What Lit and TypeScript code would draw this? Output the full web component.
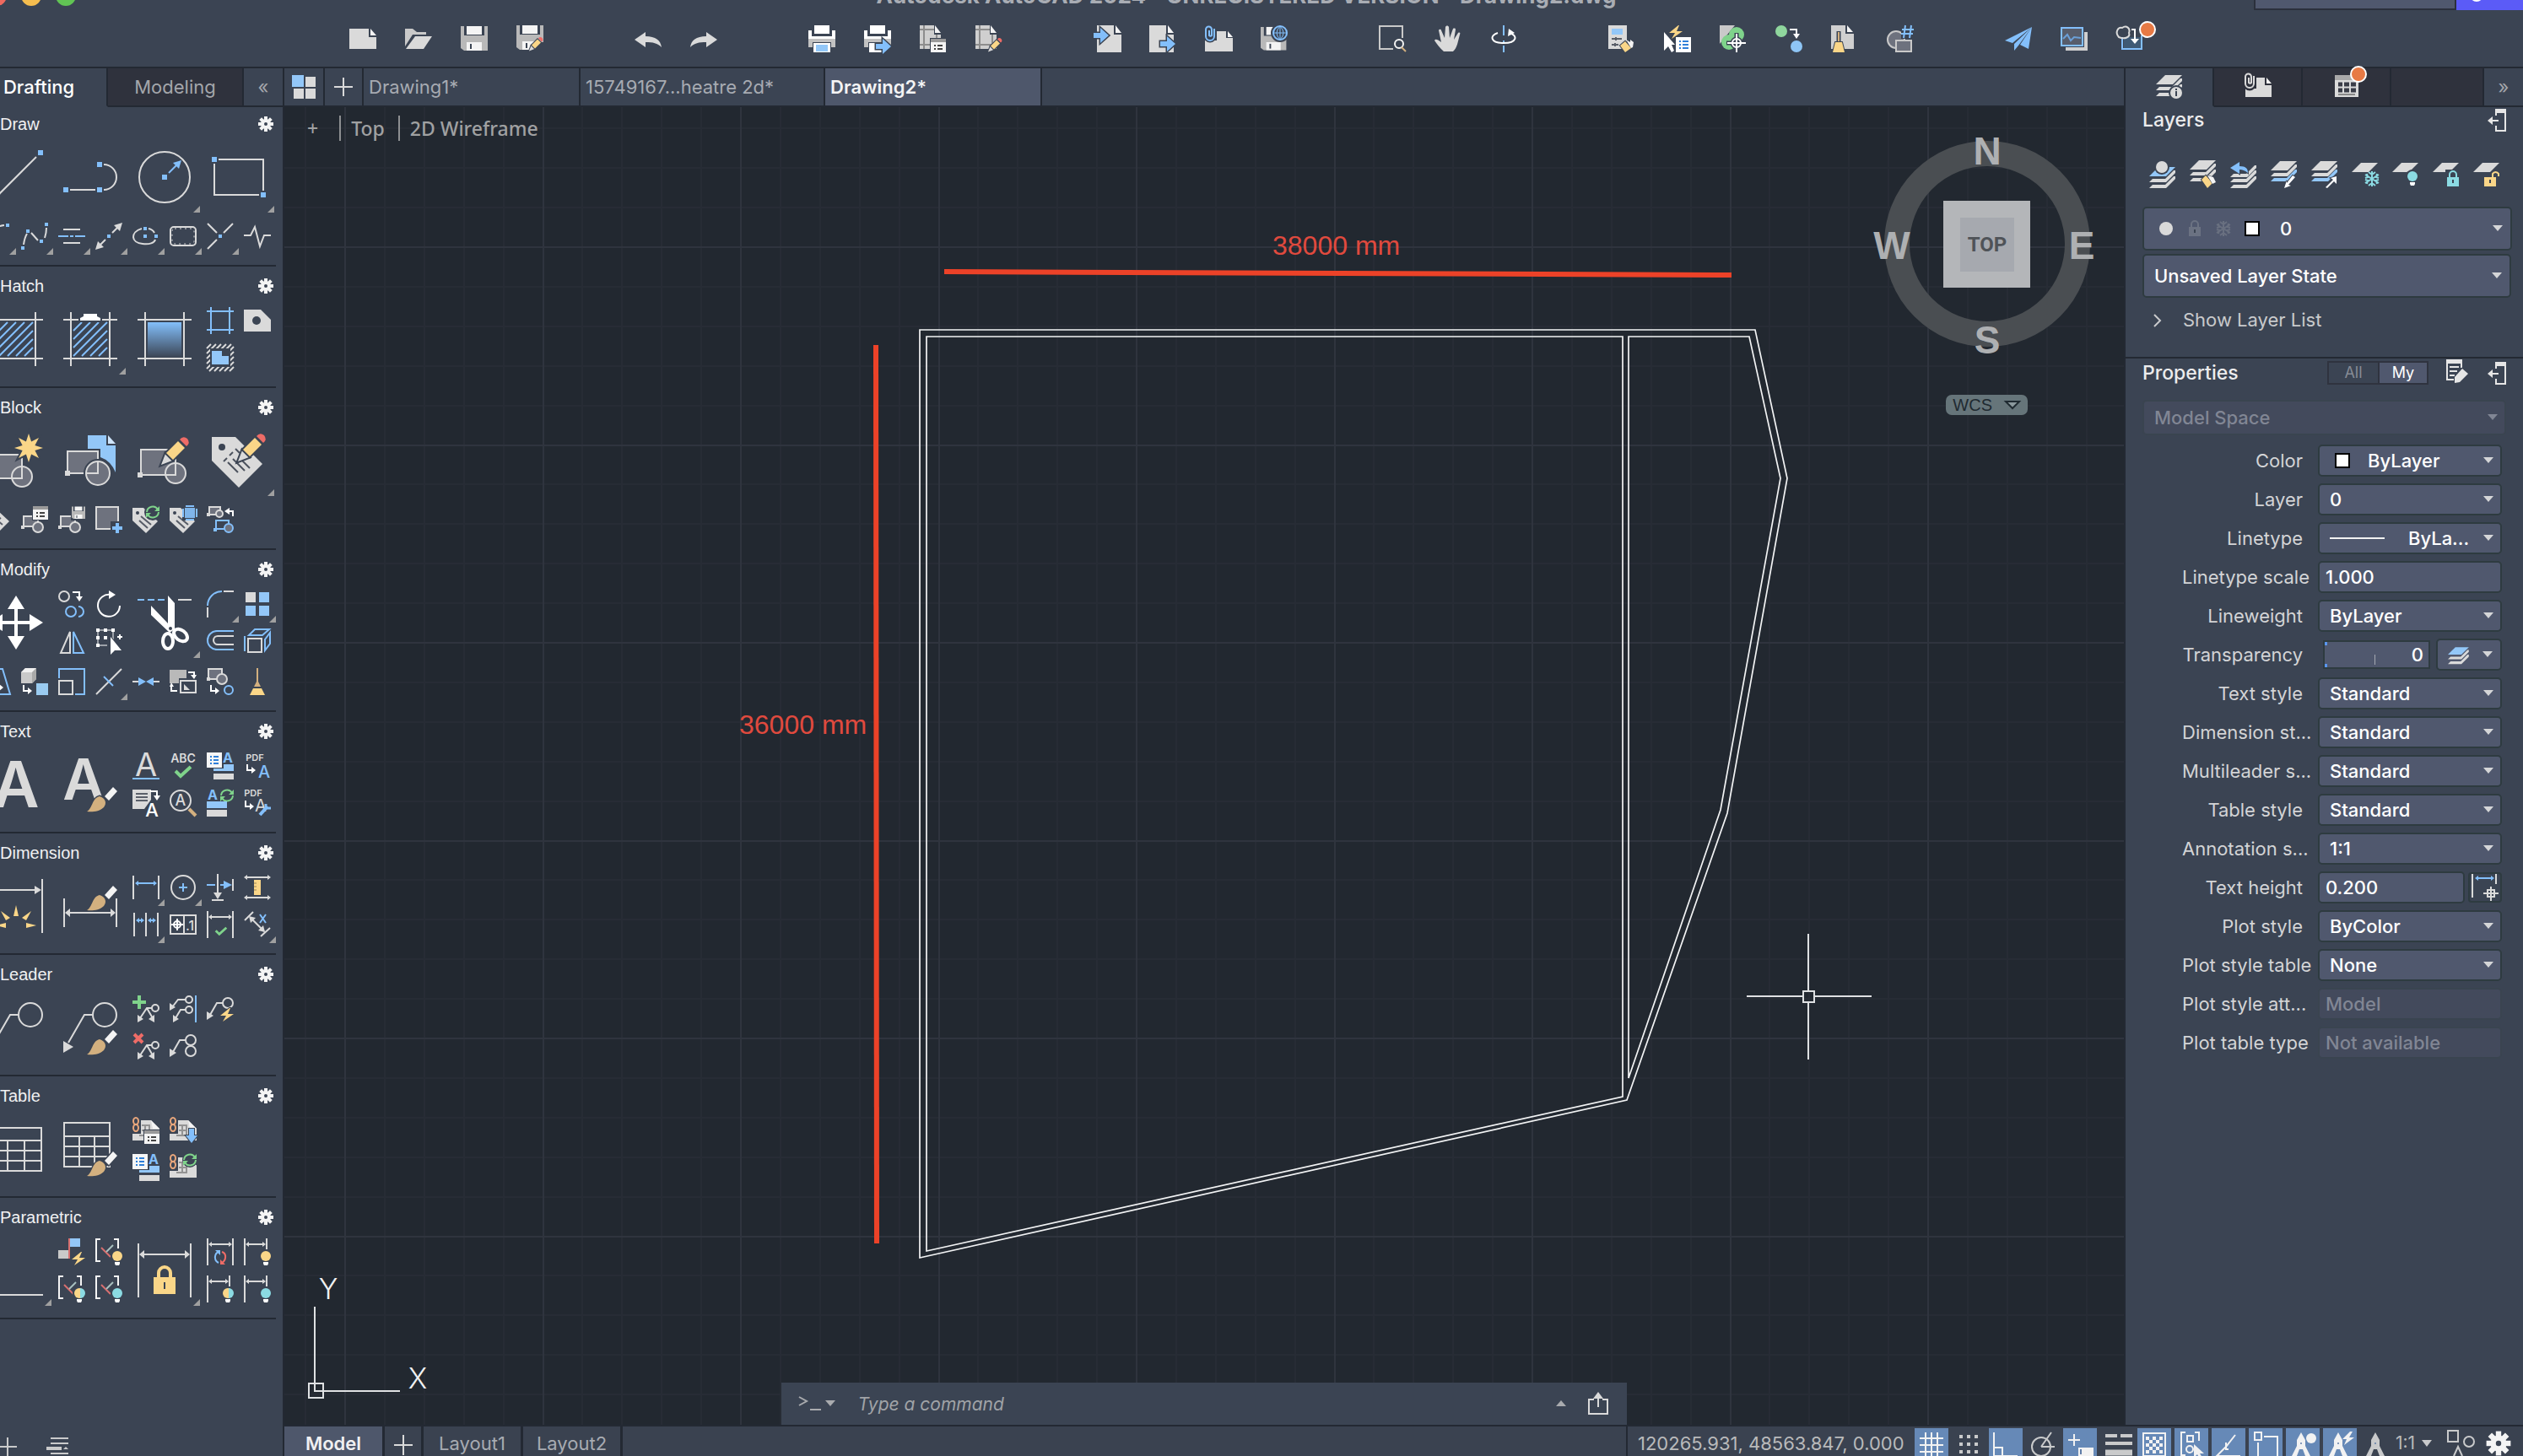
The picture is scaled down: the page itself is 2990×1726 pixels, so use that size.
import { LitElement, html, css, svg, nothing } from "lit";
import { customElement, property } from "lit/decorators.js";
import { classMap } from "lit/directives/class-map.js";

const G = "#dadada";
const B = "#83bffb";
const W = "#ffffff";
const Y = "#fad688";
const GR = "#7fd38b";
const R = "#ee6c67";
const TAN = "#d3b07f";
const BG = "#3b4453";
const FILL = "#6e727e";
const CY = "#8bdbe3";

type Part = unknown;

/* ---------- icon building blocks ---------- */
const line = (d: string, c = G, w = 2): Part => svg`<path d=${d} fill="none" stroke=${c} stroke-width=${w}></path>`;
const fill = (d: string, c = G): Part => svg`<path d=${d} fill=${c}></path>`;
const cut = (d: string, c = G, w = 2): Part =>
  svg`<path d=${d} fill=${c} stroke=${BG} stroke-width=${w} paint-order="stroke"></path>`;
const box = (x: number, y: number, w: number, h: number, c = G): Part =>
  svg`<rect x=${x} y=${y} width=${w} height=${h} fill=${c}></rect>`;
const ring = (x: number, y: number, r: number, c = G, f = "none", w = 2): Part =>
  svg`<circle cx=${x} cy=${y} r=${r} fill=${f} stroke=${c} stroke-width=${w}></circle>`;
const dot = (x: number, y: number, r: number, c = G): Part => svg`<circle cx=${x} cy=${y} r=${r} fill=${c}></circle>`;
const node = (x: number, y: number, s = 6, c = B): Part => box(x - s / 2, y - s / 2, s, s, c);
const word = (t: string, x: number, y: number, s: number, c = G, w = 600): Part =>
  svg`<text x=${x} y=${y} font-size=${s} font-weight=${w} fill=${c} text-anchor="middle" font-family="Inter, sans-serif">${t}</text>`;
const at = (x: number, y: number, part: Part, s = 1): Part =>
  svg`<g transform="translate(${x} ${y}) scale(${s})">${part}</g>`;

const pencil = svg`
  ${cut("M0 33L5 20L13 28Z", G, 4)}${cut("M6 19L20 5L28 13L14 27Z", Y, 4)}
  ${cut("M22 3Q26 -2 31 2Q35 7 30 11Z", R, 0)}`;
const brush = svg`
  ${cut("M49 46L59 35L64 40L54 51Z", "#f4f4f4", 3)}
  ${cut("M28 64C35 60 34 48 43 46C50 48 52 54 48 59C43 64 34 65 28 64Z", TAN, 3)}`;
const refresh = svg`
  ${line("M1 8A7 7 0 0 1 14 5M15 8A7 7 0 0 1 2 11", GR)}
  ${fill("M16 1V7H10ZM0 15V9H6Z", GR)}`;
const bolt = cut("M11 0L0 9H7L3 16L16 7H9L12 0Z", Y, 2);
const check = line("M1 6L7 12L19 1", GR, 4);
const bulb = (c: string, half = false): Part => svg`
  ${dot(6, 6, 8, BG)}${dot(6, 6, 6, c)}
  ${half ? fill("M7 0A6 6 0 0 1 7 12Z", CY) : nothing}
  ${fill("M3 13H9V15L8 17H4L3 15Z", W)}`;
const arrowH = (a: number, b: number, y: number, c = G, s = 4): Part => svg`
  ${line(`M${a + s} ${y}H${b - s}`, c)}
  ${fill(`M${a} ${y}L${a + s + 1} ${y - s}V${y + s}ZM${b} ${y}L${b - s - 1} ${y - s}V${y + s}Z`, c)}`;
const elbow = svg`${line("M1 0V7H7", W)}${fill("M6 3L11 7L6 11Z", W)}`;
const elbowDown = svg`${line("M0 1H8V7", W)}${fill("M4 6H12L8 12Z", W)}`;
const tag = svg`
  ${fill("M0 2H13L30 18L16 32L0 17Z")}${dot(6, 8, 2, BG)}
  ${line("M8 17L18 26M10 12L22 22M16 12L20 15", "#565b66", 2)}`;
const blockShape = svg`
  <rect x="3" y="12" width="17" height="12" fill=${FILL} stroke=${G} stroke-width="2"></rect>
  ${ring(20, 25, 6, G, FILL)}${node(2, 25, 4, G)}`;
const listCard = svg`
  ${box(0, 0, 18, 18, "#f6f6f6")}
  ${line("M4 5H6M4 9H6M4 13H6M8 5H14M8 9H14M8 13H14", "#2f7fd8")}`;
const listStyle = svg`
  ${listCard}${word("A", 25, 12, 16, B, 700)}${fill("M20 14H32V22H8V19H20Z", "#93c7f8")}${box(8, 25, 24, 7)}`;
const windowCard = svg`
  ${box(-1, -1, 20, 18, BG)}${box(0, 0, 18, 16, "#f4f4f4")}${box(0, 0, 18, 4, "#9a9a9a")}
  ${line("M4 8H6M4 12H6M8 8H14M8 12H14", "#444")}`;
const floppy = svg`
  ${fill("M0 1H4V12H28V1H32V30H4L0 27Z", "#b9b9b9")}${box(7, 1, 18, 10, "#f4f4f4")}
  ${box(7, 20, 18, 10, "#f4f4f4")}${line("M12 22V28", BG)}`;
const page = svg`${fill("M0 0H20V11H29V32H0Z")}${fill("M22 0L29 9H22Z", "#f4f4f4")}`;
const paperclip = (c: string): Part => svg`
  ${line("M11 5V13A5 5 0 0 1 1 13V5A5 5 0 0 1 11 5Z", BG, 5)}
  ${line("M11 4V13A5 5 0 0 1 1 13V5A3 3 0 0 1 8 5V12A2 2 0 0 1 5 12V6", c)}`;
const brackets = svg`
  ${line("M6 1H1V27H6M22 1H27V12", "#f4f4f4")}${line("M7 11L18 22", "#d87070")}${line("M13 16L21 8", "#a9c2c0")}`;
const chain = svg`
  <ellipse cx="4" cy="5" rx="3" ry="4" fill="none" stroke="#e9a77c" stroke-width="2"></ellipse>
  <ellipse cx="4" cy="13" rx="3" ry="4" fill="none" stroke="#e9a77c" stroke-width="2"></ellipse>`;
const linkedPage = svg`
  ${fill("M10 4H22L32 14V28H0V20H10Z")}${fill("M22 4L32 14H24Z", "#f4f4f4")}
  ${line("M11 10H20V22H8M11 16H20M15 10V22", "#939393", 2)}${chain}`;
const printer = svg`
  ${box(7, 0, 18, 10, W)}${fill("M0 6H4V13H28V6H32V16H0Z", W)}${fill("M0 16H32V26H27V20H5V26H0Z", "#c2c2c2")}
  ${box(6, 21, 20, 11, W)}`;
const plotPage = svg`
  ${fill("M0 0H17V11H25V28H0Z", "#cfcfcf")}${fill("M18 0L25 9H18Z", "#f4f4f4")}
  ${line("M5 0V28M0 5H17M0 23H25M20 11V28", "#8d8d8d")}`;
const layerSheet = (y: number, c = G): Part => fill(`M11 ${y}H31L20 ${y + 11}H0Z`, c);
const layerEdge = (y: number, c = G): Part => fill(`M4 ${y}H19L29 ${y - 10}H31V${y - 7}L20 ${y + 4}H0Z`, c);
const padlock = (c: string, open = false): Part => svg`
  ${line(open ? "M10 9V4A4 4 0 0 1 17 4V7" : "M3 9V5A4 4 0 0 1 11 5V9", c)}
  ${box(0, 8, 14, 11, c)}${line("M7 11V15", BG)}`;
const snow = (c: string): Part =>
  line("M9 0V18M1 4L17 14M17 4L1 14M5 1L9 4L13 1M5 17L9 14L13 17M1 8L4 7L3 3M17 8L14 7L15 3M1 10L4 11L3 15M17 10L14 11L15 15", c, 2);

const star = (() => {
  const pts: string[] = [];
  for (let i = 0; i < 16; i++) {
    const r = i % 2 ? 8 : 17;
    const a = (Math.PI * i) / 8;
    pts.push(`${(r * Math.sin(a)).toFixed(1)} ${(-r * Math.cos(a)).toFixed(1)}`);
  }
  return `M${pts.join("L")}Z`;
})();

const hatchFrame = svg`${line("M9 0V64M55 0V64M0 9H64M0 55H64")}`;
const hatchLines = line("M12 22L22 12M12 32L32 12M12 42L42 12M12 52L52 12M22 52L52 22M32 52L52 32M42 52L52 42", B);
const hatchRing = line(
  "M0 5L5 0M0 11L11 0M0 17L17 0M0 23L23 0M0 29L29 0M3 32L32 3M9 32L32 9M15 32L32 15M21 32L32 21M27 32L32 27",
  G, 2);

const gearShape = svg`
  <g fill="#f4f4f4">
    ${[0, 45, 90, 135].map((a) => svg`<rect x="-2" y="-9" width="4" height="18" transform="rotate(${a})"></rect>`)}
    <circle r="6"></circle>
  </g>
  <circle r="2" fill=${BG}></circle>`;

/* ---------- tool palette ---------- */
interface Tool {
  name: string;
  art: Part;
  big?: boolean;
  more?: boolean;
}
interface Section {
  title: string;
  main: Tool[];
  extra?: Tool[];
}
const big = (name: string, art: Part, more = false): Tool => ({ name, art, big: true, more });
const small = (name: string, art: Part, more = false): Tool => ({ name, art, more });

const sections: Section[] = [
  {
    title: "Draw",
    main: [
      big("Line", svg`${line("M8 56L56 8")}${node(3, 61)}${node(61, 3)}`),
      big("Polyline", svg`${line("M8 47H38M48 17A15 15 0 0 1 48 47")}${node(3, 47)}${node(43, 17)}${node(43, 47)}`),
      big("Circle", svg`${ring(32, 32, 30)}${node(32, 32)}${line("M37 27L47 17", B)}${fill("M52 12L42 15L49 22Z", B)}`, true),
      big("Rectangle", svg`${line("M8 11H61V48M56 53H3V16")}${node(3, 11)}${node(61, 53)}`, true),
    ],
    extra: [
      small("Arc", svg`${line("M24 3C14 4 7 10 4 22")}${node(28, 3, 4)}`, true),
      small("Spline", svg`${line("M3 26Q4 18 7 13M12 12L20 21M28 18Q30 12 30 6")}${node(8, 10, 4)}${node(30, 2, 4)}${node(24, 22, 4)}${node(2, 30, 4)}`, true),
      small("Multiline", svg`${line("M6 8H26M6 24H26")}${line("M0 16H12M14 16H18M20 16H32", B)}`, true),
      small("Construction line", svg`${line("M20 12L27 5M12 20L5 27")}${fill("M32 0L22 3L29 10ZM0 32L3 22L10 29Z")}${node(16, 16, 4)}`, true),
      small("Ellipse", svg`${line("M11 7C-3 11 -2 24 12 25C20 26 26 24 27 20M19 7Q24 8 26 12")}${node(15, 7, 4)}${node(15, 16, 4)}${node(28, 16, 4)}`, true),
      small("Revision cloud", svg`
        <rect x="1" y="5" width="30" height="22" rx="4" fill="none" stroke=${G} stroke-width="2"></rect>
        <rect x="3" y="7" width="26" height="18" rx="3" fill="none" stroke=${G} stroke-width="1" stroke-dasharray="2 4"></rect>`, true),
      small("Break", svg`${line("M1 1L12 12M31 1L20 12M1 31L12 20")}${node(16, 16, 4)}`, true),
      small("Breakline", line("M0 15H8L13 5L19 28L24 15H32")),
    ],
  },
  {
    title: "Hatch",
    main: [
      big("Hatch", svg`${hatchFrame}${hatchLines}`),
      big("Hatch edit", svg`${hatchFrame}${hatchLines}${cut("M20 10V7L24 5V2H40V5L44 7V10Z", W, 4)}`, true),
      big("Gradient", svg`${hatchFrame}
        <defs><linearGradient id="fade" x1="0" y1="0" x2="0" y2="1">
          <stop offset="0" stop-color=${B}></stop><stop offset="1" stop-color=${BG}></stop>
        </linearGradient></defs>
        <rect x="12" y="12" width="40" height="42" fill="url(#fade)"></rect>`),
      small("Boundary", line("M5 0V32M27 0V32M0 5H32M0 27H32", B)),
      small("Wipeout", svg`${hatchRing}${box(4, 5, 24, 22, BG)}${fill("M6 8H18V14H26V24H6Z", "#93c7f8")}`),
      small("Region", svg`${fill("M0 3H20L32 15V29H0Z")}${dot(15, 16, 5, BG)}`),
    ],
  },
  {
    title: "Block",
    main: [
      big("Create block", svg`<rect x="4" y="25" width="35" height="28" fill=${FILL} stroke=${G} stroke-width="2"></rect>
        ${ring(39, 51, 12, G, FILL)}${line("M27 53H39V40")}${at(47, 17, cut(star, Y, 4))}`),
      big("Insert block", svg`${fill("M29 2H51V14H62V46Q56 32 44 28V18H29Z", "#93c7f8")}${fill("M53 2L62 12H53Z", "#cfe5fb")}
        <rect x="5" y="21" width="36" height="26" fill=${FILL} stroke=${G} stroke-width="2"></rect>
        ${dot(41, 47, 17, BG)}${ring(41, 47, 14, G, FILL)}${line("M28 47H41V34")}${node(5, 47, 6, G)}`),
      big("Edit block", svg`<rect x="4" y="19" width="41" height="30" fill=${FILL} stroke=${G} stroke-width="2"></rect>
        ${ring(45, 47, 12, G, FILL)}${line("M34 49H45V36")}${node(3, 49, 6, G)}${at(28, 4, pencil)}`),
      big("Edit attributes", svg`${fill("M0 4H28L60 36L32 64L0 32Z")}${dot(12, 16, 4, BG)}
        ${line("M14 33L18 29M21 26L25 22M19 34L31 46M25 30L39 44M28 18L33 23M36 32L45 41", "#4c525e")}${at(31, 0, pencil)}`, true),
    ],
    extra: [
      small("Define attributes", tag),
      small("Block properties", svg`${blockShape}${at(14, 0, windowCard)}`),
      small("Write block", svg`${blockShape}${box(15, 0, 17, 17, BG)}${at(16, 0, floppy, 0.5)}`),
      small("Base point", svg`<rect x="1" y="1" width="26" height="26" fill=${FILL} stroke=${G} stroke-width="2"></rect>
        ${box(18, 18, 14, 14, BG)}${line("M26 20V32M20 26H32", B, 4)}`),
      small("Sync attributes", svg`${tag}${dot(24, 7, 10, BG)}${at(16, -1, refresh)}`),
      small("Attribute display", svg`${tag}${box(15, -1, 18, 18, BG)}${box(18, 2, 12, 12, "#7fb5ea")}
        ${line("M19 0H29M19 16H29M16 3V13M32 3V13", B)}`),
      small("Replace block", svg`
        <rect x="3" y="1" width="13" height="9" fill=${FILL} stroke=${G} stroke-width="2"></rect>${ring(15, 9, 4, G, FILL)}${node(2, 10, 4, G)}
        <rect x="11" y="17" width="15" height="10" fill=${BG} stroke=${B} stroke-width="2"></rect>${ring(26, 26, 5, B, FILL)}${node(10, 28, 4, B)}
        ${line("M31 12V6H25", W)}${fill("M27 2L21 6L27 10Z", W)}`),
    ],
  },
  {
    title: "Modify",
    main: [
      big("Move", fill("M32 0L42 16H34V30H48V22L64 32L48 42V34H34V48H42L32 64L22 48H30V34H16V42L0 32L16 22V30H30V16H22Z", W)),
      small("Copy", svg`${ring(7, 7, 6)}${at(17, 1, elbowDown)}${ring(15, 25, 6, B)}${line("M24 19A6 6 0 1 1 24 31", B)}`),
      small("Mirror", svg`${line("M14 5V30H3Z")}${line("M18 5V30H30Z", B)}`),
      small("Rotate", svg`${line("M29 18A13 13 0 1 1 18 5", W)}${fill("M16 0L24 5L16 10Z", W)}`),
      small("Stretch", svg`${[[3, 3], [12, 3], [21, 3], [3, 12], [12, 12], [3, 21]].map(([x, y]) => node(x, y, 4, W))}
        ${line("M3 3H21V14M3 3V21H14", W, 1)}${line("M26 11H32M29 8V14", W)}${cut("M18 11V32L23 27H31Z", W, 2)}`),
      big("Trim", svg`${line("M0 5H8M12 5H20M24 5H32", B)}${line("M48 5H64")}
        ${fill("M36 0L44 9V40L38 44L16 23V12L36 33Z", W)}${dot(39, 39, 2, BG)}
        <ellipse cx="36" cy="54" rx="6" ry="9" fill="none" stroke=${W} stroke-width="4"></ellipse>
        <ellipse cx="51" cy="47" rx="9" ry="6" transform="rotate(38 51 47)" fill="none" stroke=${W} stroke-width="4"></ellipse>`, true),
      small("Fillet", svg`${line("M1 18A17 17 0 0 1 18 1", B)}${line("M20 1H32M1 20V32")}`, true),
      small("Offset", svg`${line("M32 4H12A11 11 0 0 0 12 26H32", B)}${line("M32 10H13A5 5 0 0 0 13 20H32")}`),
      small("Array", svg`${box(2, 2, 12, 12)}${box(18, 2, 12, 12, "#93c7f8")}${box(2, 18, 12, 12, "#93c7f8")}${box(18, 18, 12, 12, "#93c7f8")}`, true),
      small("Presspull", svg`<rect x="5" y="13" width="16" height="16" fill="none" stroke=${G} stroke-width="2"></rect>
        ${line("M6 9L13 2H30L22 9ZM25 14L31 6V19L25 27ZM1 10V28", B)}`),
    ],
    extra: [
      small("Taper", svg`${line("M12 1H22L31 31H4", B)}${at(12, 16, elbow)}`),
      small("3D copy", svg`${fill("M0 5L5 0H18V13L13 18H0Z", "#c9c9c9")}${fill("M0 5L5 0H18L13 5Z", "#f0f0f0")}${fill("M13 5L18 0V13L13 18Z", "#a9a9a9")}
        ${box(18, 18, 14, 14, "#9acbf0")}${at(2, 20, elbow)}`),
      small("Scale", svg`${line("M1 15H17V31H1Z")}${line("M1 12V1H31V31H20", B)}`),
      small("Break at point", svg`${line("M1 31L31 1")}${line("M10 10L21 21", B)}`, true),
      small("Join", svg`${line("M0 16H7M25 16H32")}${fill("M7 11L16 16L7 21ZM25 11L16 16L25 21Z", B)}`),
      small("Draw order", svg`${box(0, 2, 20, 16, "#b9b9b9")}${box(11, 12, 21, 20, BG)}${line("M13 15H31V29H13Z")}${fill("M17 19L24 26H17Z")}
        ${line("M22 5H29V9M2 21V27H9", W)}${fill("M25 8H32L29 13ZM0 22H5L2 17Z", W)}`),
      small("Copy nested", svg`<rect x="2" y="1" width="16" height="12" fill=${FILL} stroke=${G} stroke-width="2"></rect>
        ${ring(18, 13, 6, G, FILL)}${node(2, 13, 4, G)}${at(4, 20, elbow)}${ring(26, 26, 5, B)}`),
      small("Purge", svg`${line("M16 0V18", TAN)}${fill("M12 22L16 14L20 22Z", TAN)}${fill("M11 24H21L25 32H7Z", Y)}`),
    ],
  },
  {
    title: "Text",
    main: [
      big("Multiline text", word("A", 32, 59, 76, G, 600)),
      big("Text style", svg`${word("A", 24, 50, 68, G, 600)}${brush}`),
      small("Single line text", svg`${word("A", 16, 28, 38, G, 400)}${box(0, 30, 32, 2, B)}`),
      small("Text align", svg`${fill("M0 0H22V12L14 23H0Z")}${line("M4 5H18M4 9H18M4 13H18", "#5a5f69")}${at(21, 1, elbowDown)}${word("A", 23, 32, 22, W, 500)}`),
      small("Spelling", svg`${word("ABC", 16, 12, 14, G, 600)}${at(6, 16, check)}`),
      small("Find text", svg`${ring(13, 13, 12)}${word("A", 13, 19, 18, G, 500)}${line("M23 23L31 31", TAN, 4)}`),
      small("Text styles list", listStyle),
      small("Update text", svg`${word("A", 7, 12, 16, B, 700)}${at(16, -1, refresh)}${box(0, 14, 24, 8, "#93c7f8")}${box(0, 24, 24, 8)}`),
      small("PDF to text", svg`${word("PDF", 13, 10, 11, G, 600)}${at(3, 14, elbow)}${word("A", 24, 30, 20, B, 500)}`),
      small("PDF recognition", svg`${word("PDF", 11, 8, 11, G, 600)}${at(1, 13, elbow)}${word("A", 20, 26, 20, G, 400)}
        ${line("M19 30L28 20", B, 4)}${line("M26 17V22H32", B, 3)}`),
    ],
  },
  {
    title: "Dimension",
    main: [
      big("Dimension", svg`${line("M0 13H56M63 0V64")}${fill("M62 13L54 8V18Z")}
        ${fill("M32 31L35 44H29ZM50 38L44 49L39 46ZM14 38L20 49L25 46ZM56 55L44 52V58ZM8 55L20 52V58Z", Y)}`),
      big("Dimension style", svg`${line("M1 23V57M63 23V57")}${arrowH(2, 62, 40, G, 5)}${at(0, -27, brush)}`),
      small("Linear", svg`${line("M1 2V30M31 2V30")}${arrowH(3, 29, 11, B, 3)}`, true),
      small("Continue", svg`${line("M2 2V30M16 2V30M30 2V30")}${arrowH(4, 14, 11, B, 3)}${arrowH(18, 28, 11, B, 3)}`, true),
      small("Center mark", svg`${ring(16, 16, 14)}${line("M16 11V21M11 16H21", B)}`, true),
      small("Tolerance", svg`${line("M1 5H31V27H1ZM17 5V27")}${ring(9, 16, 4, W)}${line("M9 9V23M2 16H16", W)}${word(".1", 24, 23, 16, G, 500)}`),
      small("Ordinate", svg`${line("M13 0V24M6 31H20M31 6V20")}${fill("M8 22H18L13 30Z")}${line("M0 13H10M16 13H22", B)}${fill("M20 8L30 13L20 18Z", B)}`),
      small("Check dimension", svg`${line("M1 0V32M31 0V32")}${arrowH(2, 30, 7, G, 3)}${at(10, 19, check, 0.7)}`),
      small("Dimension space", svg`${arrowH(0, 32, 4, G, 3)}${arrowH(0, 32, 28, G, 3)}${box(12, 7, 8, 18, Y)}${line("M12 11H15M12 15H15M12 19H15", "#9a8455", 1)}`),
      small("Oblique", svg`${line("M1 11L11 1M20 30L31 20M8 8L24 24")}${fill("M6 6L14 8L8 14ZM25 25L17 23L23 17Z")}${line("M19 4L26 14M26 4L19 14", B)}`, true),
    ],
  },
  {
    title: "Leader",
    main: [
      big("Multileader", svg`${ring(49, 17, 14)}${line("M34 17H25L6 50")}${fill("M0 62V48L12 55Z")}`),
      big("Multileader style", svg`${ring(49, 17, 14)}${line("M34 17H25L6 50")}${fill("M0 62V48L12 55Z")}${brush}`),
      small("Add leader", svg`${line("M8 0V16M0 8H16", GR, 4)}${ring(27, 15, 4)}${line("M23 15H17L9 27M17 15L24 27")}${fill("M6 32V23L13 28ZM26 32V23L19 28Z")}`),
      small("Remove leader", svg`${line("M2 2L12 12M12 2L2 12", R, 4)}${ring(27, 15, 4)}${line("M23 15H17L9 27M17 15L24 27")}${fill("M6 32V23L13 28ZM26 32V23L19 28Z")}`),
      small("Align leaders", svg`${ring(23, 5, 4)}${ring(23, 17, 4)}${line("M19 5H10L3 14M19 17H13L7 27")}${fill("M0 18V9L7 14ZM4 32V23L11 28Z")}${box(30, 0, 2, 32, B)}`),
      small("Collect leaders", svg`${ring(25, 9, 6)}${ring(25, 22, 6)}${line("M19 9H12L4 23")}${fill("M0 29V19L8 24Z")}`),
      small("Quick leader", svg`${ring(25, 9, 6)}${line("M19 9H12L4 23")}${fill("M0 29V19L8 24Z")}${at(16, 15, bolt)}`),
    ],
  },
  {
    title: "Table",
    main: [
      big("Table", line("M2 7H62V58H2ZM2 22H62M2 34H62M2 46H62M22 22V58M42 22V58")),
      big("Table style", svg`${line("M1 1H55V53H1ZM1 17H55M1 29H55M1 41H55M19 17V53M37 17V53")}${brush}`),
      small("Link data", svg`${linkedPage}${at(14, 16, windowCard)}`),
      small("Table styles list", listStyle),
      small("Download data", svg`${linkedPage}${cut("M23 14H29V22H33L26 31L19 22H23Z", B, 2)}`),
      small("Upload data", svg`${linkedPage}${dot(24, 7, 9, BG)}${at(16, -1, refresh)}`),
    ],
  },
  {
    title: "Parametric",
    main: [
      big("Geometric constraint", line("M0 61H64"), true),
      small("Auto constrain", svg`${box(14, 0, 12, 10, "#93c7f8")}${box(0, 14, 12, 10, "#c9c9c9")}${box(12, 0, 2, 24, "#d87070")}${at(16, 16, bolt)}`),
      small("Toggle constraints", svg`${brackets}${at(19, 15, bulb(Y, true))}`),
      small("Show constraints", svg`${brackets}${at(20, 15, bulb(Y))}`),
      small("Hide constraints", svg`${brackets}${at(20, 15, bulb(CY))}`),
      big("Dimensional constraint", svg`${line("M1 0V64M63 0V64")}${arrowH(2, 62, 13, G, 5)}
        ${line("M25 41V35A7 7 0 0 1 39 35V41", Y, 4)}${box(19, 40, 26, 20, Y)}${line("M32 46V54", BG)}`, true),
      small("Convert constraint", svg`${line("M1 0V32M31 0V32")}${arrowH(2, 30, 7, G, 3)}
        ${line("M14 29C8 26 9 18 14 16", B)}${line("M18 16C24 18 23 26 18 29", R)}${fill("M10 14H16V20Z", B)}${fill("M22 31H16V25Z", R)}`),
      small("Toggle dimensions", svg`${line("M1 0V32M27 0V13")}${arrowH(2, 26, 7, G, 3)}${at(19, 15, bulb(Y, true))}`),
      small("Show dimensions", svg`${line("M1 0V32M27 0V13")}${arrowH(2, 26, 7, G, 3)}${at(20, 15, bulb(Y))}`),
      small("Hide dimensions", svg`${line("M1 0V32M27 0V13")}${arrowH(2, 26, 7, G, 3)}${at(20, 15, bulb(CY))}`),
    ],
  },
];

/* ---------- top toolbar ---------- */
const arrowOut = (x: number, y: number): Part => at(x, y, cut("M0 4H8V-2L18 7L8 16V10H0Z", B, 3));
const toolbar: [string, Part][][] = [
  [
    ["New", svg`${fill("M0 4H23V14H32V28H0Z")}${fill("M25 4L32 12H25Z", "#f4f4f4")}`],
    ["Open", svg`${fill("M0 4H9L14 8H25V11H9L0 25Z", "#c9c9c9")}${fill("M12 13H32L22 28H1Z")}`],
    ["Save", floppy],
    ["Save as", svg`${at(0, -1, floppy)}${box(20, 20, 12, 12, BG)}${at(15, 14, pencil, 0.5)}`],
  ],
  [
    ["Undo", fill("M13 8V13C25 13 31 18 32 26C27 21 22 20 13 20V26L0 17Z")],
    ["Redo", fill("M19 8V13C7 13 1 18 0 26C5 21 10 20 19 20V26L32 17Z")],
  ],
  [
    ["Plot", svg`${printer}${box(9, 23, 14, 8, "#93c7f8")}`],
    ["Batch plot", svg`${printer}${arrowOut(14, 18)}`],
    ["Page setup", svg`${plotPage}${at(13, 16, windowCard)}`],
    ["Plot styles", svg`${plotPage}${at(15, 15, pencil, 0.5)}`],
  ],
  [
    ["Import", svg`${at(4, 0, page)}${arrowOut(0, 5)}`],
    ["Export", svg`${page}${arrowOut(13, 15)}`],
    ["Attach", svg`${fill("M0 18H14V7H25V15H33V31H0Z")}${fill("M27 7L33 14H27Z", "#f4f4f4")}${paperclip(B)}`],
    ["Save to web", svg`${at(0, 1, floppy, 0.95)}${dot(23, 9, 11, BG)}${ring(23, 9, 8, B)}
      ${line("M15 9H31M23 1V17M23 1Q15 9 23 17M23 1Q31 9 23 17", B, 1)}`],
  ],
  [
    ["Zoom window", svg`${line("M17 28H1V1H28V15", "#c9c9c9")}${ring(24, 22, 5, "#f4f4f4")}${line("M27 26L32 31", TAN)}`],
    ["Pan", fill("M11 31C6 27 3 22 0 18C1 16 3 16 8 20L5 6C6 4 8 5 8 6L12 15L13 2C14 0 16 0 17 2L18 15L22 4C24 3 25 4 25 5L23 17L28 9C30 8 31 9 30 11C28 18 27 27 22 31Z")],
    ["Orbit", svg`${line("M16 0V12M16 18V20M16 24V32", B)}${line("M9 9C-1 12 0 21 16 21C32 21 33 12 23 9", W)}${fill("M22 4L29 9L21 13Z", W)}`],
  ],
  [
    ["Properties", svg`${fill("M0 0H22V18L16 28H0Z")}${box(4, 4, 13, 7, "#93c7f8")}${line("M4 16H16M4 23H12M9 14V18M8 21V25", "#5a5f69")}
      ${cut("M14 24L20 19L27 27L20 32Z", Y, 2)}${fill("M21 17L26 20L26 17L30 20L29 26L27 27Z", "#f4f4f4")}`],
    ["Quick select", svg`${at(6, 0, bolt)}${fill("M0 8V30L5 25L9 32L12 30L9 23H13Z", W)}${box(14, 14, 18, 18, W)}${line("M18 19H20M18 23H20M18 27H20M22 19H29M22 23H29M22 27H29", "#2f7fd8")}`],
    ["Geolocation", svg`${fill("M0 0H18L0 22Z", "#c9c9c9")}${dot(20, 11, 9, GR)}${dot(11, 20, 9, GR)}
      ${ring(20, 21, 5, BG, "none", 5)}${line("M20 9V32M8 21H31", BG, 5)}${ring(20, 21, 5, W)}${line("M20 10V32M9 21H31", W)}`],
    ["Match", svg`${dot(7, 7, 7, "#8fd69d")}${dot(25, 25, 7, "#8ec5f5")}${at(17, 4, elbowDown)}`],
    ["Purge drawing", svg`${fill("M0 0H17V10H27V28H0Z", "#d0d0d0")}${fill("M19 0L26 8H19Z", "#f4f4f4")}
      ${line("M9 7V20", BG, 5)}${line("M9 8V20", TAN)}${cut("M5 20H13L16 32H2Z", Y, 2)}`],
    ["Count", svg`${ring(11, 17, 10, "#c9c9c9", FILL)}<rect x="11" y="18" width="18" height="13" fill=${FILL} stroke="#c9c9c9" stroke-width="2"></rect>
      ${box(17, -1, 16, 17, BG)}${line("M22 0L20 15M29 0L27 15M18 5H32M17 10H31", B)}`],
  ],
  [
    ["Send", fill("M32 2L0 18L9 21ZM32 2L11 22V30L16 24ZM32 2L18 23L28 28Z", B)],
    ["Compare", svg`${box(6, 8, 26, 22, "#d0d0d0")}${box(0, 2, 28, 24, BG)}
      <rect x="1" y="3" width="25" height="21" fill="#575d6b" stroke=${B} stroke-width="2"></rect>${line("M3 16L8 11L12 18L16 14L24 15", "#6b9fd6")}`],
    ["Cloud share", svg`${line("M7 14V28H30V12", B)}${box(9, 14, 20, 13, "#3f5a75")}
      ${line("M3 14C-2 8 2 2 7 3C12 -1 17 4 15 9C17 14 10 17 3 14Z")}${line("M18 5H22V18", W)}${fill("M17 16H27L22 22Z", W)}
      <circle cx="37" cy="5" r="9" fill="#e77a45" stroke="#fff" stroke-width="2"></circle>`],
  ],
];

/* ---------- layer tools ---------- */
const layerTools: [string, Part][] = [
  ["Match layer", svg`${layerSheet(7, "#93c7f8")}${layerEdge(21)}${layerEdge(28)}${dot(15, 7, 9, BG)}${dot(15, 7, 7, G)}`],
  ["Layer properties", svg`${layerSheet(-1)}${layerEdge(13)}${layerEdge(20)}${cut("M14 22L19 17L27 26L21 32Z", Y, 2)}${cut("M21 17L28 19L31 25L27 27Z", "#f4f4f4", 1)}`],
  ["Previous layer", svg`${layerEdge(15)}${layerEdge(21)}${layerEdge(28)}${cut("M11 1V6C19 6 21 9 21 14C17 11 15 10 11 10V15L0 8Z", B, 2)}`],
  ["Merge down", svg`${layerSheet(0)}${layerEdge(14)}${layerEdge(20, "#93c7f8")}${cut("M26 17L19 26V23L16 32L24 29L21 28L29 19Z", W, 2)}`],
  ["Merge up", svg`${layerSheet(0)}${layerEdge(14)}${layerEdge(20, "#93c7f8")}${cut("M17 31L26 22L23 20L30 18L30 27L27 24L19 32Z", W, 2)}`],
  ["Freeze layer", svg`${layerSheet(2)}${dot(24, 21, 9, BG)}${at(15, 12, snow(CY))}`],
  ["Layer off", svg`${layerSheet(2)}${at(18, 12, bulb(CY))}`],
  ["Lock layer", svg`${layerSheet(2)}${box(15, 10, 18, 20, BG)}${at(17, 11, padlock(CY))}`],
  ["Unlock layer", svg`${layerSheet(2)}${box(11, 13, 18, 17, BG)}${at(13, 11, padlock(Y, true))}`],
];
const sheetStack = svg`${layerSheet(4, "#93c7f8")}${layerEdge(18)}${layerEdge(25)}`;
const dockArt = svg`${line("M10 9V3H21V27H10V21", "#e6e6e6")}${box(9, 1, 13, 5, "#e6e6e6")}${line("M4 15H13", "#e6e6e6")}${fill("M0 15L6 10V20Z", "#e6e6e6")}`;

/* ---------- properties ---------- */
interface Prop {
  label: string;
  value: string;
  kind?: "select" | "input" | "disabled" | "slider" | "height" | "color" | "linetype";
}
const props: Prop[] = [
  { label: "Color", value: "ByLayer", kind: "color" },
  { label: "Layer", value: "0" },
  { label: "Linetype", value: "ByLa...", kind: "linetype" },
  { label: "Linetype scale", value: "1.000", kind: "input" },
  { label: "Lineweight", value: "ByLayer" },
  { label: "Transparency", value: "0", kind: "slider" },
  { label: "Text style", value: "Standard" },
  { label: "Dimension st...", value: "Standard" },
  { label: "Multileader s...", value: "Standard" },
  { label: "Table style", value: "Standard" },
  { label: "Annotation s...", value: "1:1" },
  { label: "Text height", value: "0.200", kind: "height" },
  { label: "Plot style", value: "ByColor" },
  { label: "Plot style table", value: "None" },
  { label: "Plot style att...", value: "Model", kind: "disabled" },
  { label: "Plot table type", value: "Not available", kind: "disabled" },
];

/* ---------- status toggles ---------- */
const H = "#f2f2f2";
const D = "#c9cacb";
const compassLeg = (c: string): Part => svg`${fill("M12 0L17 9V16L23 28H17L14 20H10L7 28H1L7 16V9Z", c)}${dot(12, 13, 1, "#5f7da8")}`;
const toggles: { name: string; on: boolean; art: Part }[] = [
  { name: "Grid", on: true, art: line("M7 0V30M14 0V30M21 0V30M0 7H28M0 15H28M0 23H28", H) },
  { name: "Snap", on: false, art: svg`${[2, 11, 20].map((x) => [3, 12, 21].map((y) => svg`${node(x + 3, y + 2, 4, D)}`))}` },
  { name: "Ortho", on: true, art: line("M0 0V28H28M0 18H10V28", H) },
  { name: "Polar tracking", on: false, art: svg`${ring(12, 17, 11, D)}${line("M12 17H28M12 17L24 0", D)}` },
  { name: "Dynamic input", on: true, art: svg`${line("M7 2V16M0 9H14", H)}${box(12, 18, 18, 10, H)}${line("M15 20V26", "#5f7da8")}` },
  { name: "Lineweight", on: false, art: svg`${line("M0 4H14M18 4H32", D, 4)}${line("M0 13H32", D, 4)}${line("M0 24H32", D, 7)}` },
  {
    name: "Transparency", on: true,
    art: svg`${line("M1 1H27V28H1Z", H)}${[0, 1, 2, 3, 4].map((r) => [0, 1, 2, 3, 4].map((c) => ((r + c) % 2 ? nothing : svg`${box(4 + c * 4, 5 + r * 4, 4, 4, H)}`)))}`,
  },
  { name: "Selection cycling", on: true, art: svg`${line("M7 0H2V27H7M18 0H23V10", H)}${line("M9 4H16V11H9Z", H)}${ring(12, 20, 4, H)}${fill("M17 14V30L21 26L24 32L27 30L24 25H29Z", H)}` },
  { name: "Object snap tracking", on: true, art: line("M22 3L11 17L0 28H28M11 12V20H14", H) },
  { name: "Object snap", on: true, art: svg`${line("M1 0H9V9H1ZM12 5H28V28M5 12V28", H)}` },
  { name: "Annotation visibility", on: true, art: svg`${compassLeg(H)}${dot(24, 7, 6, H)}` },
  { name: "Annotation autoscale", on: true, art: svg`${compassLeg(H)}${fill("M26 -1L17 8H22L19 15L31 6H25L29 -1Z", H)}` },
  { name: "Annotation", on: false, art: compassLeg(D) },
];

/* ---------- drawing grid ---------- */
const STEP = 469;
const gridPath = (major: boolean): string => {
  let d = "";
  for (let i = -3; i < 60; i++) {
    const isMajor = ((i % 5) + 5) % 5 === 0;
    if (isMajor !== major) continue;
    const x = Math.round(409 + (i * STEP) / 10);
    const y = Math.round(293 + (i * STEP) / 10);
    d += `M${x} 0V2400M0 ${y}H5000`;
  }
  return d;
};
const minorGrid = gridPath(false);
const majorGrid = gridPath(true);

@customElement("ui-icon")
export class UiIcon extends LitElement {
  @property({ attribute: false }) art: Part = nothing;
  @property({ type: Number }) size = 32;
  static styles = css`
    :host { display: block; flex: none; }
    .art { display: block; overflow: visible; }
  `;
  render() {
    return html`<svg class="art" width=${this.size} height=${this.size} viewBox="0 0 ${this.size} ${this.size}" aria-hidden="true">${this.art}</svg>`;
  }
}

@customElement("tool-palette")
export class ToolPalette extends LitElement {
  static styles = css`
    :host { display: flex; flex-direction: column; overflow: hidden; background: #3b4453; font-family: "Liberation Sans", Arial, sans-serif; }
    button { border: 0; margin: 0; padding: 0; background: none; color: inherit; font: inherit; display: flex; align-items: center; justify-content: center; }
    .tabs { display: flex; height: 44px; flex: none; font-family: Inter, sans-serif; font-size: 22px; }
    .tab { border-right: 2px solid #232933; border-bottom: 2px solid #232933; background: #2f323d; color: #a4a6ab; flex: 1; height: 46px; }
    .tab.on { background: #3b4453; color: #fff; border-bottom-color: #3b4453; flex: none; width: 128px; padding-right: 34px; font-weight: 500; }
    .tab.fold { background: #3b4453; flex: none; width: 46px; border-right: 0; }
    .sections { flex: 1; min-height: 0; }
    .section { margin-right: 8px; border-bottom: 2px solid #232933; padding-bottom: 12px; color: #f0f1f2; }
    .section:first-child { margin-top: -1px; }
    .head { display: flex; align-items: center; justify-content: space-between; height: 42px; padding-right: 3px; }
    .title { margin: 0; padding-top: 4px; font-size: 20px; line-height: 24px; font-weight: 400; }
    .gear { width: 18px; height: 18px; margin-top: 4px; }
    .tools { display: grid; grid-auto-flow: column; grid-template-rows: 44px 44px; grid-auto-columns: 44px; margin-left: -25px; }
    .tools.extra { grid-template-rows: 44px; margin-top: 4px; }
    .tool { position: relative; }
    .tool.big { grid-area: span 2 / span 2; }
    .tool.more::after { content: ""; position: absolute; right: 0; bottom: 0; border: 4px solid transparent; border-right-color: #a0a0a0; border-bottom-color: #a0a0a0; }
    .tool.big.more::after { right: 2px; bottom: 2px; }
    .foot { display: flex; align-items: center; gap: 34px; height: 24px; flex: none; }
  `;
  private tool(t: Tool) {
    return html`<button class=${classMap({ tool: true, big: !!t.big, more: !!t.more })} aria-label=${t.name}>
      <ui-icon .size=${t.big ? 64 : 32} .art=${t.art}></ui-icon>
    </button>`;
  }
  render() {
    return html`
      <div class="tabs" role="tablist">
        <button class="tab on" role="tab" aria-selected="true">Drafting</button>
        <button class="tab" role="tab" aria-selected="false">Modeling</button>
        <button class="tab fold" aria-label="Collapse palette">«</button>
      </div>
      <div class="sections">
        ${sections.map((s) => html`
          <section class="section">
            <div class="head">
              <h2 class="title">${s.title}</h2>
              <button class="gear" aria-label="${s.title} settings">
                <ui-icon .size=${18} .art=${at(9, 9, gearShape)}></ui-icon>
              </button>
            </div>
            <div class="tools">${s.main.map((t) => this.tool(t))}</div>
            ${s.extra ? html`<div class="tools extra">${s.extra.map((t) => this.tool(t))}</div>` : nothing}
          </section>`)}
      </div>
      <div class="foot">
        <button aria-label="Add palette"><ui-icon .size=${20} .art=${line("M9 0V22M0 11H20", D)}></ui-icon></button>
        <button aria-label="Palette list"><ui-icon .size=${28} .art=${svg`${line("M6 5H27M6 11H27M6 23H27", D)}${box(1, 15, 18, 4, D)}${fill("M21 18L24 15L27 18Z", D)}`}></ui-icon></button>
      </div>`;
  }
}

@customElement("drawing-canvas")
export class DrawingCanvas extends LitElement {
  static styles = css`
    :host { display: block; position: relative; overflow: hidden; background: #222830; }
    button { border: 0; margin: 0; padding: 0; background: none; font: inherit; color: inherit; }
    .sheet { display: block; position: absolute; inset: 0; width: 100%; height: 100%; }
    .view { position: absolute; left: 27px; top: 10px; display: flex; align-items: center; color: #a0a1a2; font-family: "Noto Sans", sans-serif; font-weight: 500; font-size: 23px; line-height: 36px; }
    .view button { padding: 0 16px 0 12px; border-left: 2px solid #8d8f91; line-height: 30px; }
    .view .plus { border: 0; padding: 0 25px 0 0; }
    .compass { position: absolute; right: 32px; top: 25px; width: 260px; height: 280px; overflow: visible; }
    .wcs { position: absolute; right: 114px; top: 341px; display: flex; align-items: center; gap: 14px; height: 24px; padding: 0 8px; border-radius: 7px; background: #66757a; color: #1f2a31; font-family: "Liberation Sans", sans-serif; font-size: 20px; }
    .command { position: absolute; bottom: 0; left: 27%; right: 27%; height: 50px; display: flex; align-items: center; gap: 24px; padding: 0 20px; box-sizing: border-box; background: #3b4453; color: #a9abae; font-family: Inter, sans-serif; font-size: 22px; }
    .prompt { display: flex; align-items: center; gap: 4px; }
    .entry { flex: 1; border: 0; outline: 0; background: none; color: inherit; font: italic 21px Inter, sans-serif; padding: 0 0 0 3px; }
    .entry::placeholder { color: #a0a3a7; opacity: 1; }
  `;
  render() {
    const letter = (t: string, x: number, y: number) =>
      svg`<text x=${x} y=${y} font-family="Liberation Sans, sans-serif" font-weight="700" font-size="46" text-anchor="middle" fill="#aeb0b2">${t}</text>`;
    return html`
      <svg class="sheet" role="img" aria-label="Theatre floor outline">
        <g transform="translate(-337 -127)">
          <path d=${minorGrid} stroke="#272c35" stroke-width="2"></path>
          <path d=${majorGrid} stroke="#2f343e" stroke-width="2"></path>
          <g fill="none" stroke="#f2f3f4" stroke-width="1.7">
            <path d="M1090 391H2080L2118 567L2047 964L1928 1304L1090 1491Z"></path>
            <path d="M1098 399H1923V1300L1098 1483Z"></path>
            <path d="M1930 1278V399H2073L2110 567L2039 960Z"></path>
          </g>
          <g stroke="#ec4228" stroke-width="6">
            <path d="M1119 322L2052 326"></path>
            <path d="M1038 409L1039 1474"></path>
          </g>
          <g fill="#e04a3e" font-family="Liberation Sans, sans-serif" font-size="32">
            <text x="1508" y="302">38000 mm</text>
            <text x="876" y="870">36000 mm</text>
          </g>
          <g fill="none" stroke="#dfe1e3" stroke-width="2">
            <path d="M2070 1181H2137M2150 1181H2218M2143 1107V1175M2143 1188V1256M2137 1175H2150V1188H2137Z"></path>
            <path d="M373 1549V1649H474M366 1640H383V1657H366Z"></path>
          </g>
          <g fill="#f0f1f2" font-family="Inter, sans-serif" font-weight="300" font-size="34" text-anchor="middle">
            <text x="389" y="1540">Y</text>
            <text x="495" y="1646">X</text>
          </g>
        </g>
      </svg>
      <div class="view">
        <button class="plus" aria-label="Viewport controls">+</button>
        <button>Top</button>
        <button>2D Wireframe</button>
      </div>
      <svg class="compass" viewBox="0 0 260 280" role="img" aria-label="View cube, top view">
        <circle cx="130" cy="137" r="107" fill="none" stroke="#4a4e52" stroke-width="30"></circle>
        ${letter("N", 130, 43)}${letter("S", 130, 267)}${letter("E", 242, 155)}${letter("W", 17, 155)}
        <rect x="78" y="86" width="103" height="103" fill="#b4b6b9"></rect>
        <rect x="98" y="106" width="64" height="64" fill="#a6a9af"></rect>
        <text x="130" y="146" font-family="Roboto, sans-serif" font-weight="700" font-size="24" text-anchor="middle" fill="#4f5358">TOP</text>
      </svg>
      <button class="wcs">WCS
        <ui-icon .size=${20} .art=${svg`<path d="M2 6H18L10 14Z" fill="#8b999d" stroke="#1f2a31" stroke-width="2"></path>`}></ui-icon>
      </button>
      <div class="command">
        <button class="prompt" aria-label="Recent commands">
          <ui-icon .size=${44} .art=${svg`${line("M1 14L10 19L1 24", "#a9abae")}${line("M14 29H27", "#a9abae")}${fill("M32 18H44L38 25Z", "#a9abae")}`}></ui-icon>
        </button>
        <input class="entry" type="text" aria-label="Command" placeholder="Type a command" />
        <button aria-label="Command history"><ui-icon .size=${12} .art=${fill("M0 9L6 2L12 9Z", "#a9abae")}></ui-icon></button>
        <button aria-label="Pop out"><ui-icon .size=${28} .art=${svg`${line("M9 9H3V26H25V9H19M14 18V5", G)}${fill("M14 0L20 8H8Z")}`}></ui-icon></button>
      </div>`;
  }
}

@customElement("inspector-panel")
export class InspectorPanel extends LitElement {
  static styles = css`
    :host { display: block; background: #3b4453; color: #d3d4d6; font-family: Inter, sans-serif; font-size: 22px; line-height: 28px; }
    button { border: 0; margin: 0; padding: 0; background: none; color: inherit; font: inherit; display: flex; align-items: center; justify-content: center; }
    .tabs { display: flex; height: 44px; }
    .tab { position: relative; flex: none; width: 105px; height: 46px; background: #2f323d; border-right: 2px solid #232933; border-bottom: 2px solid #232933; }
    .tab.on { background: #3b4453; border-bottom-color: #3b4453; }
    .tab.blank { flex: 1; }
    .tab.fold { width: 46px; background: #3b4453; border-right: 0; color: #a4a6ab; }
    .head { display: flex; align-items: center; padding: 0 14px 0 20px; height: 34px; }
    .title { margin: 0; font-size: 23px; font-weight: 500; color: #ececed; flex: 1; }
    .customize { margin-right: 18px; }
    .layers { border-bottom: 2px solid #232933; height: 298px; }
    .layer-tools { display: flex; align-items: flex-start; gap: 16px; padding: 32px 0 0 28px; height: 86px; box-sizing: border-box; }
    .field { display: flex; align-items: center; box-sizing: border-box; background: #50586e; border: 2px solid #2e3b40; border-radius: 5px; color: #fff; height: 38px; padding: 0 7px 0 12px; font-weight: 500; min-width: 0; flex: 1; }
    .field select, .field input { flex: 1; min-width: 0; width: 0; appearance: none; border: 0; outline: 0; margin: 0; padding: 0; background: none; color: inherit; font: inherit; opacity: 1; }
    .field.text { padding-left: 7px; }
    .field.off { background: #434a5c; border-color: #3a4450; color: #818694; }
    .wide { height: 52px; margin: 0 13px 4px 20px; padding-right: 8px; flex: none; }
    .state { margin-right: 14px; }
    .swatch { width: 14px; height: 14px; border: 2px solid #000; background: #fff; flex: none; }
    .marks { display: flex; align-items: center; gap: 16px; margin: 0 24px 0 5px; }
    .disclose { gap: 24px; padding: 8px 0 0 32px; color: #c9cacc; }
    .seg { display: flex; border: 2px solid #2f333f; height: 24px; margin-right: 20px; font-size: 18px; }
    .seg button { width: 58px; box-sizing: border-box; color: #868b95; }
    .seg button.on { background: #50586e; color: #fff; border-left: 2px solid #2f333f; }
    .space { height: 42px; margin: 15px 20px 11px 20px; }
    .rows { display: flex; flex-direction: column; gap: 8px; padding: 0 25px 0 67px; }
    .row { display: flex; align-items: center; height: 38px; }
    .name { width: 143px; flex: none; text-align: right; white-space: nowrap; margin-right: 18px; }
    .bar { display: block; width: 65px; height: 2px; background: #f2f2f2; margin-right: 28px; }
    .field .swatch { margin: 0 21px 0 6px; }
    .field .marks .swatch { margin: 0; }
    .slider { position: relative; flex: 1; display: flex; align-items: center; justify-content: flex-end; box-sizing: border-box; height: 34px; margin: 0 7px 0 6px; padding-right: 6px; border: 2px solid #2e3b40; background: #50586e; color: #fff; font-weight: 500; }
    .slider input { position: absolute; inset: 0; width: 100%; height: 100%; margin: 0; opacity: 0; }
    .slider::before { content: ""; position: absolute; left: 0; top: 0; bottom: 0; width: 3px; border: solid #5a96f0; border-width: 4px 0; }
    .slider::after { content: ""; position: absolute; left: 48%; bottom: 3px; width: 1px; height: 12px; background: #a5a9b3; }
    .mini { flex: none; width: 78px; padding: 0 8px 0 10px; }
    .mini select { color: transparent; }
    .pick { width: 40px; height: 36px; box-sizing: border-box; margin-left: 4px; border: 2px solid #2e3b40; border-radius: 4px; }
  `;
  private arrow(c = "#d5d6d8") {
    return html`<ui-icon .size=${14} .art=${fill("M1 3H13L7 10Z", c)}></ui-icon>`;
  }
  private dock(label: string) {
    return html`<button aria-label="Undock ${label}"><ui-icon .size=${28} .art=${dockArt}></ui-icon></button>`;
  }
  private control(p: Prop, id: string) {
    const pick = (lead: unknown = nothing) => html`<span class="field">${lead}<select id=${id}><option>${p.value}</option></select>${this.arrow()}</span>`;
    switch (p.kind) {
      case "color":
        return pick(html`<span class="swatch"></span>`);
      case "linetype":
        return pick(html`<span class="bar"></span>`);
      case "input":
        return html`<span class="field text"><input id=${id} type="text" .value=${p.value} /></span>`;
      case "disabled":
        return html`<span class="field text off"><input id=${id} type="text" disabled .value=${p.value} /></span>`;
      case "slider":
        return html`<span class="slider"><input id=${id} type="range" min="0" max="90" .value=${p.value} />${p.value}</span>
          <span class="field mini"><ui-icon .size=${32} .art=${at(2, 4, sheetStack, 0.8)}></ui-icon><select aria-label="Transparency source"><option>ByLayer</option></select>${this.arrow()}</span>`;
      case "height":
        return html`<span class="field text"><input id=${id} type="text" .value=${p.value} /></span>
          <button class="pick" aria-label="Pick text height"><ui-icon .size=${32} .art=${svg`${line("M1 0V28M29 0V12", G)}${arrowH(4, 27, 5, B, 3)}${line("M23 15V32M14 23H32M19 19H27V27H19Z", G)}`}></ui-icon></button>`;
      default:
        return pick();
    }
  }
  render() {
    return html`
      <div class="tabs" role="tablist">
        <button class="tab on" role="tab" aria-selected="true" aria-label="Layers and properties">
          <ui-icon .size=${32} .art=${svg`${layerSheet(2)}${layerEdge(16)}${layerEdge(23)}${dot(24, 23, 9, BG)}${dot(24, 23, 7)}${line("M24 21V27M24 18V20", BG)}`}></ui-icon>
        </button>
        <button class="tab" role="tab" aria-selected="false" aria-label="References">
          <ui-icon .size=${32} .art=${svg`${fill("M1 18H14V5H24V14H32V28H1Z")}${fill("M26 5L32 12H26Z", "#f4f4f4")}
            ${line("M11 5V13A5 5 0 0 1 1 13V5A5 5 0 0 1 11 5Z", "#2f323d", 5)}${line("M11 3V12A5 5 0 0 1 1 12V4A3 3 0 0 1 8 4V11A2 2 0 0 1 5 11V5")}`}></ui-icon>
        </button>
        <button class="tab" role="tab" aria-selected="false" aria-label="Sheets">
          <ui-icon .size=${32} .art=${svg`${box(2, 2, 28, 26)}${box(2, 2, 28, 6, "#a9a9a9")}${line("M6 13H27M6 20H27", "#3a3d48", 5)}${line("M12 8V24M20 8V24", G)}${line("M6 25H26", "#8a8a8a")}
            <circle cx="30" cy="1" r="9" fill="#e77a45" stroke="#fff" stroke-width="2"></circle>`}></ui-icon>
        </button>
        <button class="tab blank" role="tab" aria-selected="false" aria-label="Empty tab"></button>
        <button class="tab fold" aria-label="Collapse panel">»</button>
      </div>
      <section class="layers">
        <div class="head"><h2 class="title">Layers</h2>${this.dock("Layers")}</div>
        <div class="layer-tools">
          ${layerTools.map(([n, a]) => html`<button aria-label=${n}><ui-icon .size=${32} .art=${a}></ui-icon></button>`)}
        </div>
        <div class="field wide">
          <span class="marks">
            <ui-icon .size=${18} .art=${dot(9, 9, 8)}></ui-icon>
            <ui-icon .size=${18} .art=${at(2, -1, padlock("#6b7282"))}></ui-icon>
            <ui-icon .size=${18} .art=${snow("#697080")}></ui-icon>
            <span class="swatch"></span>
          </span>
          <select aria-label="Current layer"><option>0</option></select>${this.arrow()}
        </div>
        <div class="field wide state">
          <select aria-label="Layer state"><option>Unsaved Layer State</option></select>${this.arrow()}
        </div>
        <button class="disclose"><ui-icon .size=${12} .art=${line("M2 0L9 7L2 14", "#c9cacc")}></ui-icon>Show Layer List</button>
      </section>
      <section>
        <div class="head">
          <h2 class="title">Properties</h2>
          <div class="seg"><button>All</button><button class="on">My</button></div>
          <button class="customize" aria-label="Customize properties"><ui-icon .size=${32} .art=${svg`${line("M2 2H19V10M2 2V24H11", "#e6e6e6")}${box(1, 0, 19, 5, "#e6e6e6")}${line("M5 9H16M5 14H14M5 19H11", "#e6e6e6")}${cut("M11 21L20 11L27 17L17 27L11 28Z", "#e6e6e6", 2)}`}></ui-icon></button>
          ${this.dock("Properties")}
        </div>
        <div class="field off space">
          <select aria-label="Selection" disabled><option>Model Space</option></select>${this.arrow("#818694")}
        </div>
        <div class="rows">
          ${props.map((p, i) => html`<div class="row"><label class="name" for="p${i}">${p.label}</label>${this.control(p, `p${i}`)}</div>`)}
        </div>
      </section>`;
  }
}

@customElement("app-root")
export class AppRoot extends LitElement {
  static styles = css`
    :host { display: flex; flex-direction: column; height: 100vh; overflow: hidden; background: #3b4453; color: #a7abb2; font-family: Inter, sans-serif; font-size: 22px; }
    button { border: 0; margin: 0; padding: 0; background: none; color: inherit; font: inherit; display: flex; align-items: center; justify-content: center; }
    .header { flex: none; height: 79px; overflow: hidden; border-bottom: 2px solid #232933; }
    .titlebar { display: grid; grid-template-columns: 1fr auto 1fr; align-items: end; height: 32px; margin-top: -22px; }
    .lights { display: flex; gap: 17px; margin-left: -16px; align-self: start; padding-top: 5px; }
    .light { width: 24px; height: 24px; border-radius: 50%; background: #ee6a5f; }
    .light.min { background: #f5bd4f; }
    .light.max { background: #61c454; }
    .doc { margin: 0 36px 0 0; align-self: start; font-size: 26px; line-height: 34px; font-weight: 700; color: #a9adb4; white-space: nowrap; }
    .account { display: flex; justify-content: flex-end; height: 32px; }
    .search { width: 240px; box-sizing: border-box; border: 2px solid #2b303c; border-width: 0 2px 2px; background: #50586e; color: #c9cacc; font: inherit; padding: 0 12px; }
    .user { width: 79px; background: #5b5bf7; color: #fff; justify-content: flex-start; padding-left: 18px; }
    .bar { display: flex; gap: 74px; padding-left: 397px; padding-top: 20px; }
    .group { display: flex; }
    .group button { width: 66px; height: 32px; }
    .body { flex: 1; min-height: 0; display: grid; grid-template-columns: 337px 1fr; }
    .palette { border-right: 2px solid #232933; }
    .right { display: flex; flex-direction: column; min-width: 0; min-height: 0; }
    .work { flex: 1; min-height: 0; display: grid; grid-template-columns: 1fr 473px; }
    .center { display: flex; flex-direction: column; min-width: 0; }
    .panel { border-left: 2px solid #232933; }
    .docs { display: flex; height: 44px; flex: none; border-bottom: 2px solid #232933; }
    .docs button { border-right: 2px solid #232933; white-space: nowrap; justify-content: flex-start; padding-left: 6px; box-sizing: border-box; }
    .docs .home, .docs .add { width: 48px; padding: 0; justify-content: center; }
    .docs .add { width: 46px; }
    .tab { width: 257px; }
    .tab.long { width: 290px; }
    .docs .on { background: #4e576b; color: #f4f4f5; font-weight: 600; }
    .canvas { flex: 1; min-height: 0; }
    .status { display: flex; height: 35px; flex: none; overflow: hidden; border-top: 2px solid #232933; background: #3a4250; }
    .layouts { display: flex; height: 39px; flex: 1; }
    .layouts button { border-right: 3px solid #232933; width: 118px; box-sizing: border-box; }
    .layouts .model { width: 119px; background: #4e576b; color: #f0f0f1; font-weight: 600; }
    .layouts .add { width: 46px; }
    .readout { display: flex; height: 39px; align-items: center; border-left: 2px solid #232933; padding: 0 8px 0 12px; color: #b9babb; }
    .coords { width: 326px; white-space: nowrap; }
    .toggle { width: 40px; height: 38px; margin: 2px 2px 0; }
    .toggle.on { background: #6689b7; }
    .scale { gap: 8px; width: 55px; box-sizing: border-box; font-size: 21px; justify-content: flex-start; }
    .tail { width: 44px; height: 38px; }
  `;
  render() {
    return html`
      <header class="header">
        <div class="titlebar">
          <div class="lights"><span class="light"></span><span class="light min"></span><span class="light max"></span></div>
          <h1 class="doc">Autodesk AutoCAD 2024 - UNREGISTERED VERSION - Drawing2.dwg</h1>
          <div class="account">
            <input class="search" type="search" aria-label="Search" />
            <button class="user" aria-label="Account"><ui-icon .size=${20} .art=${dot(6, 8, 8, W)}></ui-icon></button>
          </div>
        </div>
        <nav class="bar" aria-label="Toolbar">
          ${toolbar.map((g) => html`<div class="group">${g.map(([n, a]) => html`<button aria-label=${n}><ui-icon .size=${32} .art=${a}></ui-icon></button>`)}</div>`)}
        </nav>
      </header>
      <div class="body">
        <tool-palette class="palette"></tool-palette>
        <div class="right">
          <div class="work">
            <main class="center">
              <div class="docs" role="tablist">
                <button class="home" aria-label="Start"><ui-icon .size=${28} .art=${svg`${box(0, 0, 14, 14, "#93c7f8")}${box(16, 2, 12, 12)}${box(2, 16, 12, 12)}${box(16, 16, 12, 12)}`}></ui-icon></button>
                <button class="add" aria-label="New drawing"><ui-icon .size=${22} .art=${line("M11 0V22M0 11H22")}></ui-icon></button>
                <button class="tab" role="tab">Drawing1*</button>
                <button class="tab long" role="tab">15749167...heatre 2d*</button>
                <button class="tab on" role="tab" aria-selected="true">Drawing2*</button>
              </div>
              <drawing-canvas class="canvas"></drawing-canvas>
            </main>
            <inspector-panel class="panel"></inspector-panel>
          </div>
          <footer class="status">
            <div class="layouts">
              <button class="model">Model</button>
              <button class="add" aria-label="New layout"><ui-icon .size=${22} .art=${line("M11 1V25M0 13H22")}></ui-icon></button>
              <button>Layout1</button>
              <button>Layout2</button>
            </div>
            <div class="readout">
              <span class="coords">120265.931, 48563.847, 0.000</span>
              ${toggles.map((t) => html`<button class=${classMap({ toggle: true, on: t.on })} aria-label=${t.name} aria-pressed=${t.on ? "true" : "false"}><ui-icon .size=${28} .art=${t.art}></ui-icon></button>`)}
              <button class="scale">1:1<ui-icon .size=${12} .art=${fill("M0 2H12L6 10Z", D)}></ui-icon></button>
              <button class="tail" aria-label="Workspace"><ui-icon .size=${32} .art=${svg`${line("M1 1H13V14H1ZM8 31L13 20L18 31", D)}${ring(26, 14, 6, D)}`}></ui-icon></button>
              <button class="tail" aria-label="Settings"><ui-icon .size=${32} .art=${at(17, 16, gearShape, 1.6)}></ui-icon></button>
            </div>
          </footer>
        </div>
      </div>`;
  }
}
